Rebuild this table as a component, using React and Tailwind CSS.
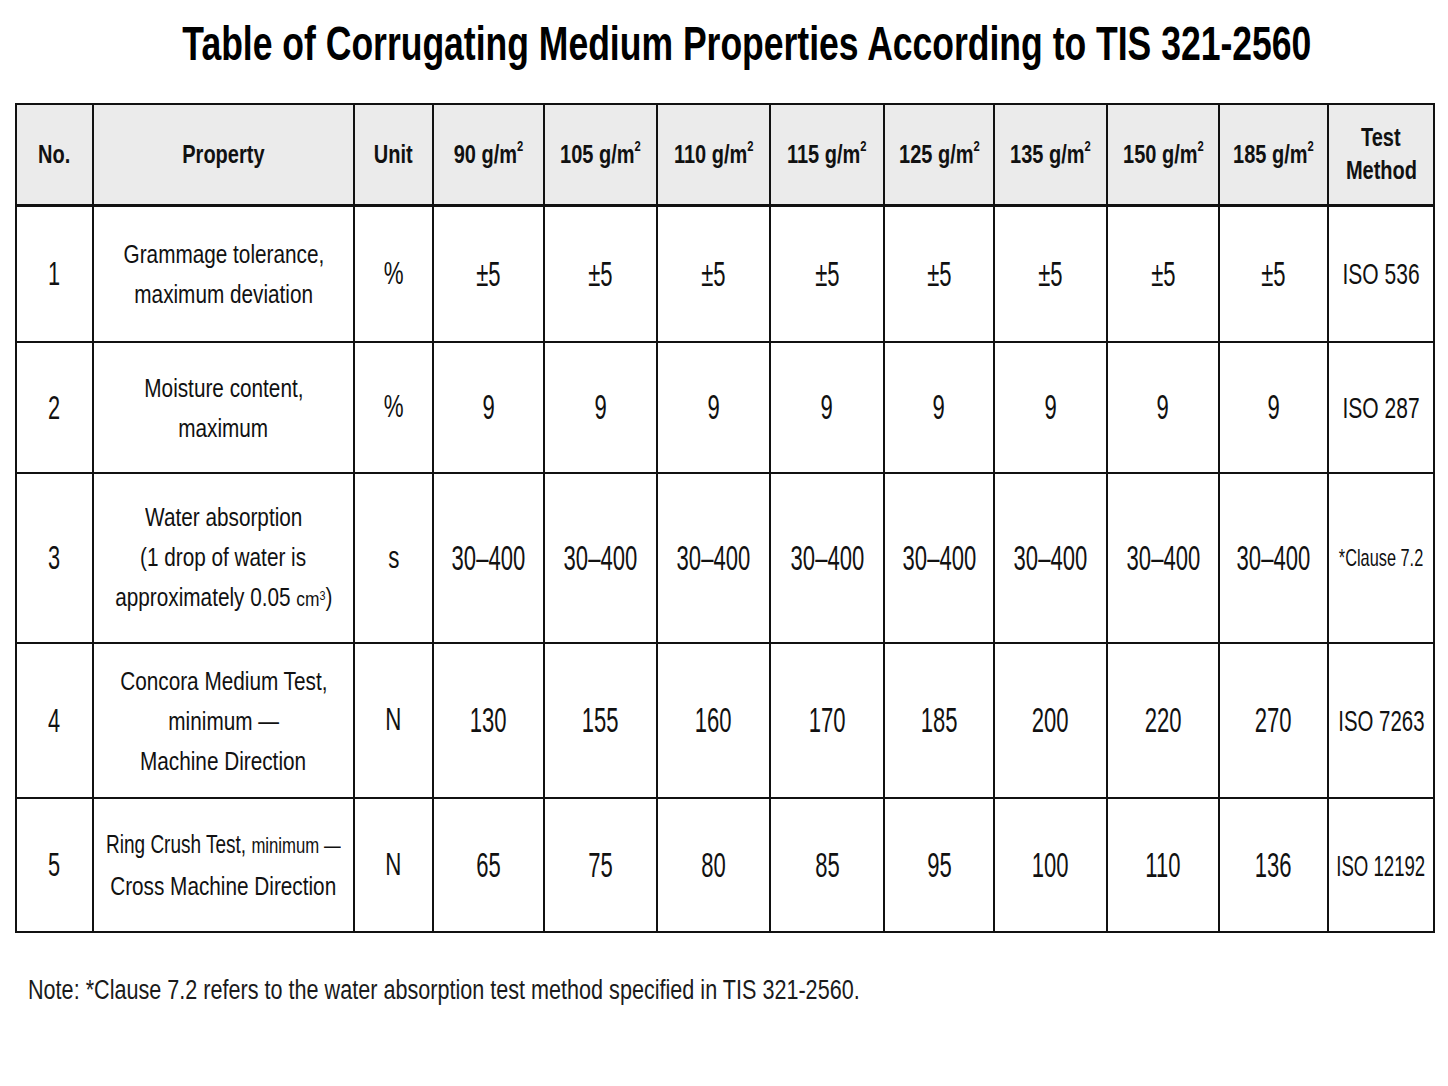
import React from "react"

const cols = ["90", "105", "110", "115", "125", "135", "150", "185"]

// condensed text: the page has no narrow face, so squeeze Liberation Sans
const N = ({ className = "", children }) => (
  <span className={"inline-block whitespace-nowrap " + className}>{children}</span>
)

// centres even when the unscaled text is wider than the cell
const C = ({ className = "", children }) => <div className={"flex justify-center " + className}>{children}</div>

const rows = [
  {
    no: "1",
    prop: ["Grammage tolerance,", "maximum deviation"],
    unit: "%",
    vals: Array(8).fill("±5"),
    method: "ISO 536",
    ms: "scale-x-[0.7]",
    h: "h-[137px]",
  },
  {
    no: "2",
    prop: ["Moisture content,", "maximum"],
    unit: "%",
    vals: Array(8).fill("9"),
    method: "ISO 287",
    ms: "scale-x-[0.7]",
    h: "h-[131px]",
  },
  {
    no: "3",
    prop: [
      "Water absorption",
      "(1 drop of water is",
      <>
        approximately 0.05 <span className="text-[21px]">cm</span>
        <sup className="text-[13px]">3</sup>)
      </>,
    ],
    unit: "s",
    vals: Array(8).fill("30–400"),
    method: "*Clause 7.2",
    ms: "scale-x-[0.68]",
    small: true,
    h: "h-[170px]",
  },
  {
    no: "4",
    prop: ["Concora Medium Test,", "minimum —", "Machine Direction"],
    unit: "N",
    vals: ["130", "155", "160", "170", "185", "200", "220", "270"],
    method: "ISO 7263",
    ms: "scale-x-[0.68]",
    h: "h-[155px]",
  },
  {
    no: "5",
    prop: [
      <>
        Ring Crush Test, <span className="text-[22px]">minimum —</span>
      </>,
      "Cross Machine Direction",
    ],
    unit: "N",
    vals: ["65", "75", "80", "85", "95", "100", "110", "136"],
    method: "ISO 12192",
    ms: "scale-x-[0.62]",
    h: "h-[134px]",
  },
]

const widths = [
  "w-[77px]",
  "w-[261px]",
  "w-[79px]",
  "w-[111px]",
  "w-[113px]",
  "w-[113px]",
  "w-[114px]",
  "w-[110px]",
  "w-[113px]",
  "w-[112px]",
  "w-[109px]",
  "w-[106px]",
]

export default function App() {
  return (
    <div
      className="w-[1448px] h-[1086px] bg-white text-[#111] overflow-hidden"
      style={{ fontFamily: '"Liberation Sans", Arial, sans-serif' }}
    >
      {/* Title */}
      <h1 className="flex justify-center pt-[16px] h-[103px] pl-[46px] text-[48px] font-bold leading-[56px] text-black">
        <N className="scale-x-[0.74]">Table of Corrugating Medium Properties According to TIS 321-2560</N>
      </h1>

      <div className="px-[15px]">
        <table className="border-collapse border-2 border-[#111] table-fixed w-[1418px]">
          <colgroup>
            {widths.map((w, i) => (
              <col key={i} className={w} />
            ))}
          </colgroup>
          <thead>
            <tr className="h-[101px] bg-[#ebebeb] border-b-[3px] border-[#111]">
              <th className="border-2 border-[#111] text-[25px] font-bold">
                <N className="scale-x-[0.8]">No.</N>
              </th>
              <th className="border-2 border-[#111] text-[25px] font-bold">
                <N className="scale-x-[0.8]">Property</N>
              </th>
              <th className="border-2 border-[#111] text-[25px] font-bold">
                <N className="scale-x-[0.8]">Unit</N>
              </th>
              {cols.map((c) => (
                <th key={c} className="border-2 border-[#111] text-[25px] font-bold">
                  <C>
                    <N className="scale-x-[0.8]">
                      {c} g/m<sup className="text-[14px] -top-[0.85em]">2</sup>
                    </N>
                  </C>
                </th>
              ))}
              <th className="border-2 border-[#111] text-[25px] font-bold leading-[33px]">
                <C>
                  <N className="scale-x-[0.8]">Test</N>
                </C>
                <C>
                  <N className="scale-x-[0.8]">Method</N>
                </C>
              </th>
            </tr>
          </thead>
          <tbody>
            {rows.map((r) => (
              <tr key={r.no} className={r.h}>
                <td className="border-2 border-[#111] text-center text-[33px]">
                  <N className="scale-x-[0.66]">{r.no}</N>
                </td>
                <td className="border-2 border-[#111] text-[25px] leading-[40px]">
                  {r.prop.map((p, i) => (
                    <C key={i}>
                      <N className={r.no === "5" && i === 0 ? "scale-x-[0.76]" : "scale-x-[0.83]"}>{p}</N>
                    </C>
                  ))}
                </td>
                <td className="border-2 border-[#111] text-center text-[31px]">
                  <N className="scale-x-[0.72]">{r.unit}</N>
                </td>
                {r.vals.map((v, i) => (
                  <td key={i} className="border-2 border-[#111] text-[35px]">
                    <C>
                      <N className="scale-x-[0.63]">{v}</N>
                    </C>
                  </td>
                ))}
                <td className={"border-2 border-[#111] " + (r.small ? "text-[24px]" : "text-[30px]")}>
                  <C>
                    <N className={r.ms}>{r.method}</N>
                  </C>
                </td>
              </tr>
            ))}
          </tbody>
        </table>
      </div>

      <p className="pl-[28px] pt-[41px] text-[27px] leading-[32px] text-[#1a1a1a]">
        <N className="origin-left scale-x-[0.8]">
          Note: *Clause 7.2 refers to the water absorption test method specified in TIS 321-2560.
        </N>
      </p>
    </div>
  )
}
